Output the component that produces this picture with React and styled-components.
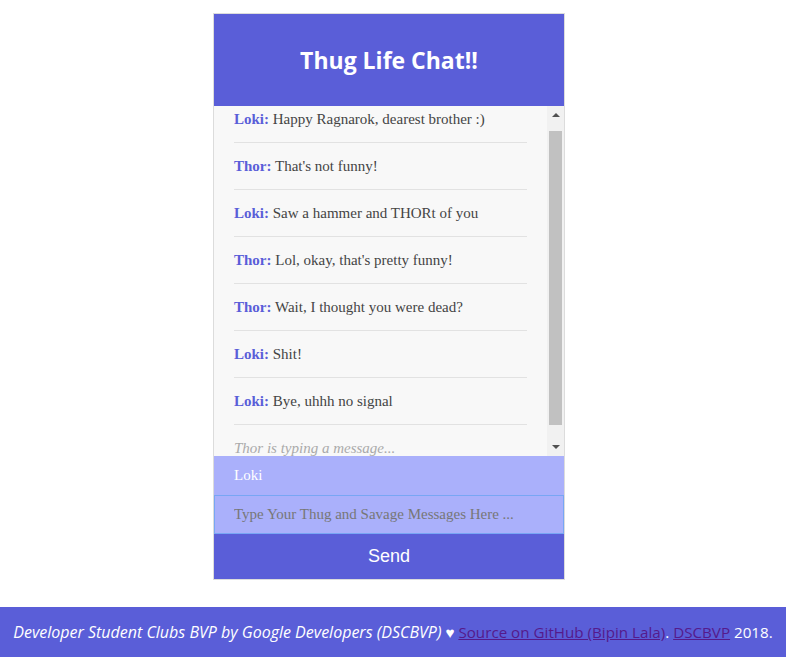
import React, { useEffect, useRef } from "react";
import styled, { createGlobalStyle } from "styled-components";

const GlobalStyle = createGlobalStyle`
  body {
    margin: 0;
    background: #fff;
    font-family: "Liberation Serif", serif;
  }
`;

const Page = styled.div`
  display: flex;
  flex-direction: column;
  min-height: 657px;
`;

const Stage = styled.div`
  display: flex;
  justify-content: center;
  padding: 13px 8px 0 0;
`;

const Card = styled.div`
  width: 350px;
  border: 1px solid #dcdcdc;
  display: flex;
  flex-direction: column;
`;

const Header = styled.header`
  height: 92px;
  background: #5a5ed8;
  display: flex;
  align-items: center;
  justify-content: center;

  h1 {
    margin: 0;
    color: #fff;
    font-family: "Open Sans", sans-serif;
    font-size: 23px;
    font-weight: 700;
  }
`;

const Pane = styled.div`
  display: flex;
  height: 350px;
  background: #f8f8f8;
`;

const Messages = styled.ul`
  flex: 1;
  list-style: none;
  margin: 0;
  padding: 0 20px;
  overflow: hidden;
`;

const Message = styled.li`
  padding: 14px 0;
  line-height: 18px;
  font-size: 15px;
  color: #444;
  border-bottom: ${({ $last }) => ($last ? "none" : "1px solid #e2e2e2")};
  ${({ $typing }) => $typing && "font-style: italic; color: #aaa;"}

  b {
    color: #5a5ed8;
  }
`;

const ScrollBar = styled.div`
  width: 17px;
  display: flex;
  flex-direction: column;
  background: #f1f1f1;
`;

const ArrowButton = styled.div`
  height: 17px;
  display: flex;
  justify-content: center;
  align-items: ${({ $down }) => ($down ? "flex-start" : "flex-end")};
  padding: ${({ $down }) => ($down ? "6px 0 0" : "0 0 6px")};
  box-sizing: border-box;

  &::before {
    content: "";
    border-left: 4px solid transparent;
    border-right: 4px solid transparent;
    ${({ $down }) =>
      $down ? "border-top: 4px solid #505050;" : "border-bottom: 4px solid #505050;"}
  }
`;

const Track = styled.div`
  flex: 1;
  padding: 8px 2px 0;
`;

const Thumb = styled.div`
  height: 294px;
  background: #c1c1c1;
`;

const Field = styled.input`
  box-sizing: border-box;
  height: 39px;
  width: 100%;
  margin: 0;
  padding: 0 ${({ $focus }) => ($focus ? 19 : 20)}px;
  border: ${({ $focus }) => ($focus ? "1px solid #78a6f4" : "none")};
  background: #aab0fb;
  color: #fff;
  font-family: "Liberation Serif", serif;
  font-size: 15px;
  outline: none;

  &::placeholder {
    color: #777;
  }
`;

const SendButton = styled.button`
  height: 45px;
  padding-top: 1px;
  border: none;
  background: #5a5ed8;
  color: #fff;
  font-family: "Liberation Sans", sans-serif;
  font-size: 18px;
  cursor: pointer;
`;

const Footer = styled.footer`
  margin-top: auto;
  height: 50px;
  background: #5a5ed8;
  display: flex;
  align-items: center;
  justify-content: center;
  color: #fff;
  font-family: "Open Sans", sans-serif;
  font-size: 15.2px;
  white-space: pre;

  i {
    font-size: 16px;
  }

  a {
    color: #551a8b;
  }
`;

const chat = [
  ["Loki", "Happy Ragnarok, dearest brother :)"],
  ["Thor", "That's not funny!"],
  ["Loki", "Saw a hammer and THORt of you"],
  ["Thor", "Lol, okay, that's pretty funny!"],
  ["Thor", "Wait, I thought you were dead?"],
  ["Loki", "Shit!"],
  ["Loki", "Bye, uhhh no signal"],
];

export default function App() {
  const listRef = useRef(null);

  useEffect(() => {
    if (listRef.current) listRef.current.scrollTop = 10;
  }, []);

  return (
    <>
      <GlobalStyle />
      <Page>
        <Stage>
          <Card>
            <Header>
              <h1>Thug Life Chat!!</h1>
            </Header>
            <Pane>
              <Messages ref={listRef}>
                {chat.map(([who, text], i) => (
                  <Message key={i}>
                    <b>{who}:</b> {text}
                  </Message>
                ))}
                <Message $typing $last>
                  Thor is typing a message...
                </Message>
              </Messages>
              <ScrollBar>
                <ArrowButton />
                <Track>
                  <Thumb />
                </Track>
                <ArrowButton $down />
              </ScrollBar>
            </Pane>
            <Field defaultValue="Loki" />
            <Field $focus placeholder="Type Your Thug and Savage Messages Here ..." />
            <SendButton>Send</SendButton>
          </Card>
        </Stage>
        <Footer>
          <i>Developer Student Clubs BVP by Google Developers (DSCBVP)</i> ♥{" "}
          <a href="#">Source on GitHub (Bipin Lala)</a>. <a href="#">DSCBVP</a> 2018.
        </Footer>
      </Page>
    </>
  );
}
